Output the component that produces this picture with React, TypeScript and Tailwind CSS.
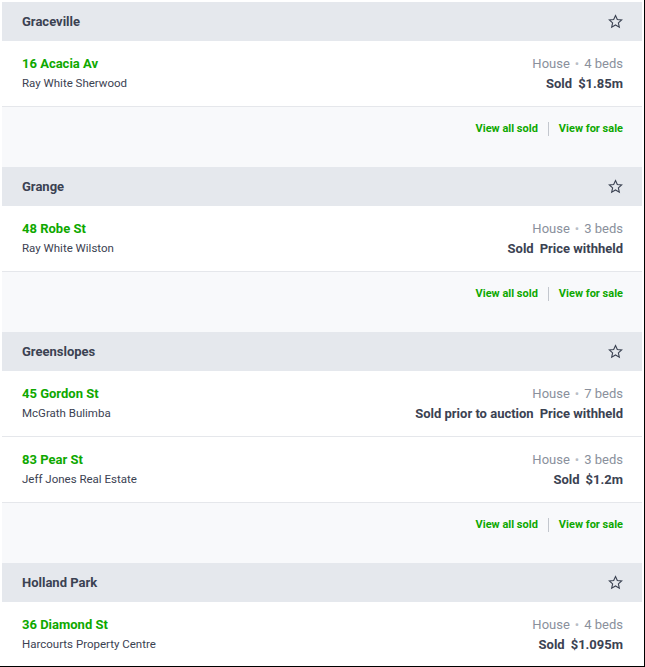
import React from "react";

type Listing = { address: string; agency: string; type: string; beds: number; status: string; price: string };
type Suburb = { name: string; listings: Listing[]; footer: boolean };

const data: Suburb[] = [
  { name: "Graceville", footer: true, listings: [{ address: "16 Acacia Av", agency: "Ray White Sherwood", type: "House", beds: 4, status: "Sold", price: "$1.85m" }] },
  { name: "Grange", footer: true, listings: [{ address: "48 Robe St", agency: "Ray White Wilston", type: "House", beds: 3, status: "Sold", price: "Price withheld" }] },
  {
    name: "Greenslopes",
    footer: true,
    listings: [
      { address: "45 Gordon St", agency: "McGrath Bulimba", type: "House", beds: 7, status: "Sold prior to auction", price: "Price withheld" },
      { address: "83 Pear St", agency: "Jeff Jones Real Estate", type: "House", beds: 3, status: "Sold", price: "$1.2m" },
    ],
  },
  { name: "Holland Park", footer: true, listings: [{ address: "36 Diamond St", agency: "Harcourts Property Centre", type: "House", beds: 4, status: "Sold", price: "$1.095m" }] },
];

function StarIcon() {
  return (
    <svg width="15" height="15" viewBox="0 0 24 24" fill="none" stroke="#3b4252" strokeWidth="1.8" strokeLinejoin="miter">
      <path d="M12 2.5l2.9 6.4 6.9.7-5.2 4.6 1.5 6.9L12 17.6l-6.1 3.5 1.5-6.9-5.2-4.6 6.9-.7z" />
    </svg>
  );
}

export default function App() {
  return (
    <div className="w-[645px] h-[667px] overflow-hidden bg-white border-r border-b border-black box-border" style={{ fontFamily: "Roboto, 'Liberation Sans', sans-serif" }}>
      <div className="pl-[2px] pt-[2px] w-[642px]">
        {data.map((s) => (
          <div key={s.name} className="w-[640px]">
            <div className="h-[39px] bg-[#e5e8ed] flex items-center justify-between pl-5 pr-[19px]">
              <span className="text-[13px] font-bold text-[#3b4252]">{s.name}</span>
              <StarIcon />
            </div>
            {s.listings.map((l) => (
              <div key={l.address} className="h-[66px] bg-white border-b border-[#e5e7eb] flex justify-between pl-5 pr-[19px] pt-[14px]">
                <div className="flex flex-col">
                  <span className="text-[13px] leading-[18px] font-bold text-[#0ea800]">{l.address}</span>
                  <span className="text-[11.5px] leading-[16px] mt-[2px] text-[#3b4252]">{l.agency}</span>
                </div>
                <div className="flex flex-col items-end">
                  <span className="text-[13px] leading-[18px] text-[#8a909c]">
                    {l.type}
                    <span className="text-[#b9bec6] mx-[5px]">•</span>
                    {l.beds} beds
                  </span>
                  <span className="text-[13px] leading-[17px] mt-[2px] font-bold text-[#3b4252]">
                    {l.status}
                    <span className="ml-[6px]">{l.price}</span>
                  </span>
                </div>
              </div>
            ))}
            {s.footer && (
              <div className="h-[60px] bg-[#f8f9fb] flex justify-end items-start pr-[19px] pt-[14px]">
                <div className="flex items-center">
                  <span className="text-[11px] leading-[16px] font-bold text-[#0ea800]">View all sold</span>
                  <span className="w-px h-[14px] bg-[#c3c7ce] mx-[10px]" />
                  <span className="text-[11px] leading-[16px] font-bold text-[#0ea800]">View for sale</span>
                </div>
              </div>
            )}
          </div>
        ))}
      </div>
    </div>
  );
}
